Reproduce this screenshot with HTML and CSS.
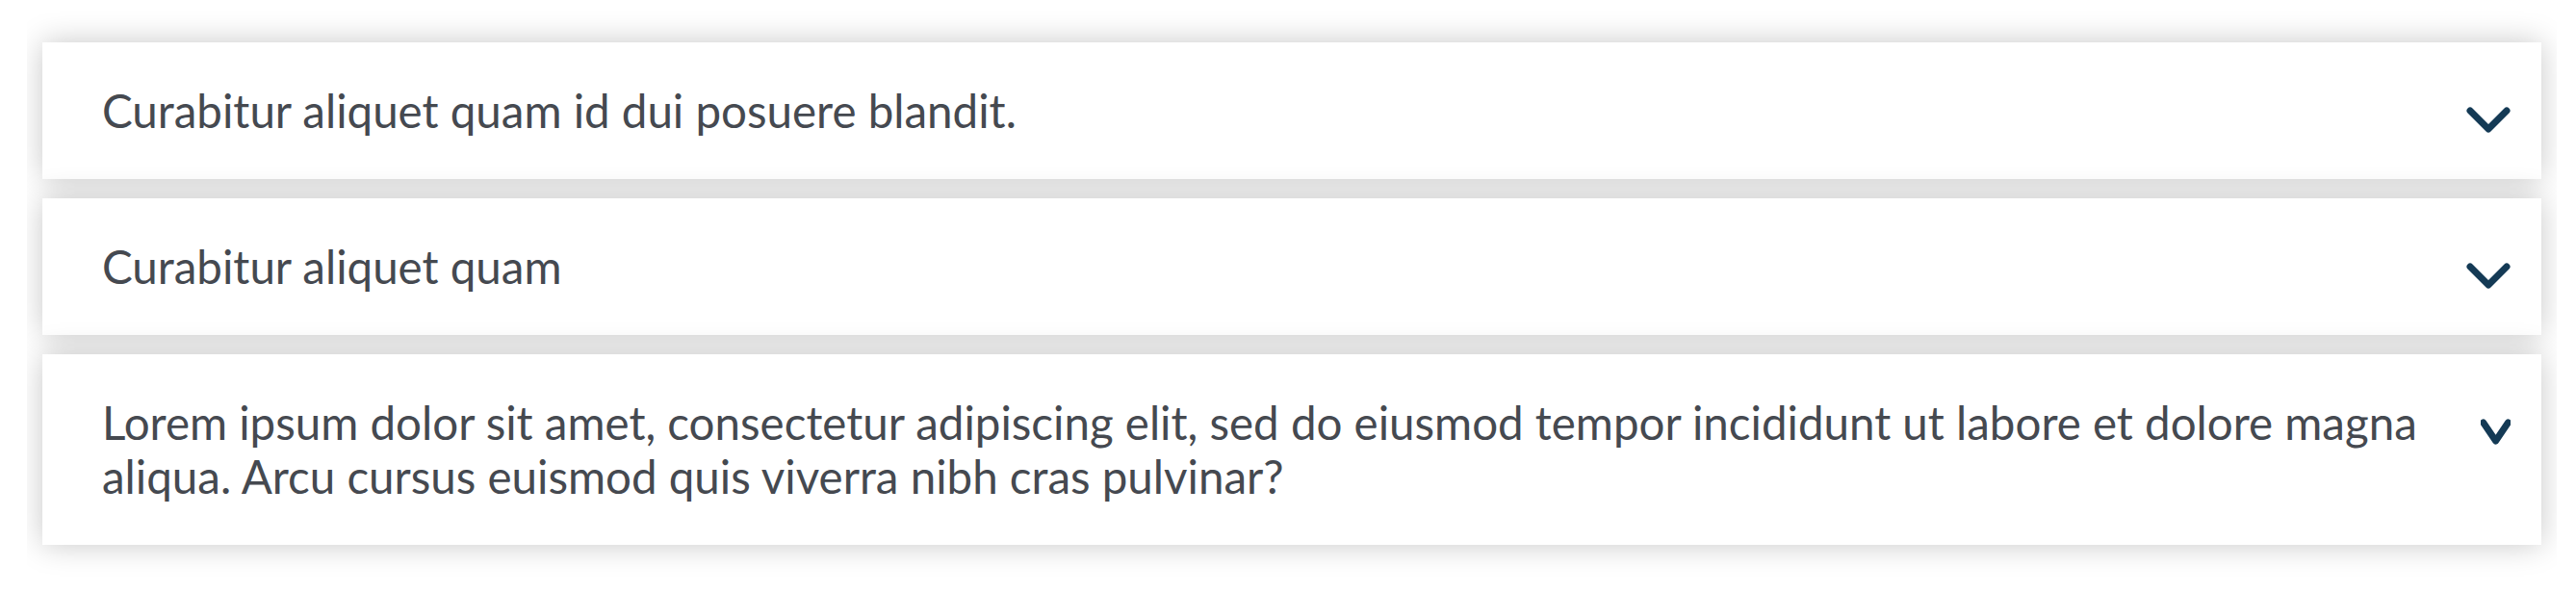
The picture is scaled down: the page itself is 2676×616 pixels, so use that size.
FILE: index.html
```html
<!DOCTYPE html>
<html lang="en">
<head>
<meta charset="utf-8">
<title>Accordion</title>
<link rel="stylesheet" href="styles.css">
</head>
<body>
<div class="frame">
  <div class="accordion">
    <div class="item">
      <div class="question">Curabitur aliquet quam id dui posuere blandit.</div>
      <svg class="chev" viewBox="0 0 46 28" preserveAspectRatio="none"><path d="M4 4 L23 23 L42 4"/></svg>
    </div>
    <div class="item">
      <div class="question">Curabitur aliquet quam</div>
      <svg class="chev" viewBox="0 0 46 28" preserveAspectRatio="none"><path d="M4 4 L23 23 L42 4"/></svg>
    </div>
    <div class="item">
      <div class="question">Lorem ipsum dolor sit amet, consectetur adipiscing elit, sed do eiusmod tempor incididunt ut labore et dolore magna aliqua. Arcu cursus euismod quis viverra nibh cras pulvinar?</div>
      <svg class="chev" viewBox="0 0 46 28" preserveAspectRatio="none"><path d="M4 4 L23 23 L42 4"/></svg>
    </div>
  </div>
</div>
</body>
</html>
```
FILE: styles.css
```css
html, body {
  margin: 0;
  padding: 0;
  background: #ffffff;
}
body {
  font-family: "Lato", "Noto Sans", sans-serif;
  color: #454950;
}
.frame {
  margin: 0 20px 0 28px;
  overflow: hidden;
  padding: 44px 16px 60px;
}
.accordion {
  display: flex;
  flex-direction: column;
  gap: 20px;
}
.item {
  display: flex;
  align-items: flex-start;
  background: #ffffff;
  box-shadow: 0 0 30px rgba(0, 0, 0, 0.22);
  padding: 43px 32px 43px 62px;
}
.question {
  flex: 1 1 auto;
  font-size: 47.5px;
  line-height: 56px;
}
.chev {
  width: 46px;
  height: 28px;
  margin-top: 24px;
  flex: 0 1 auto;
}
.chev path {
  fill: none;
  stroke: #143a55;
  stroke-width: 7;
  stroke-linecap: round;
  stroke-linejoin: round;
  vector-effect: non-scaling-stroke;
}
```
